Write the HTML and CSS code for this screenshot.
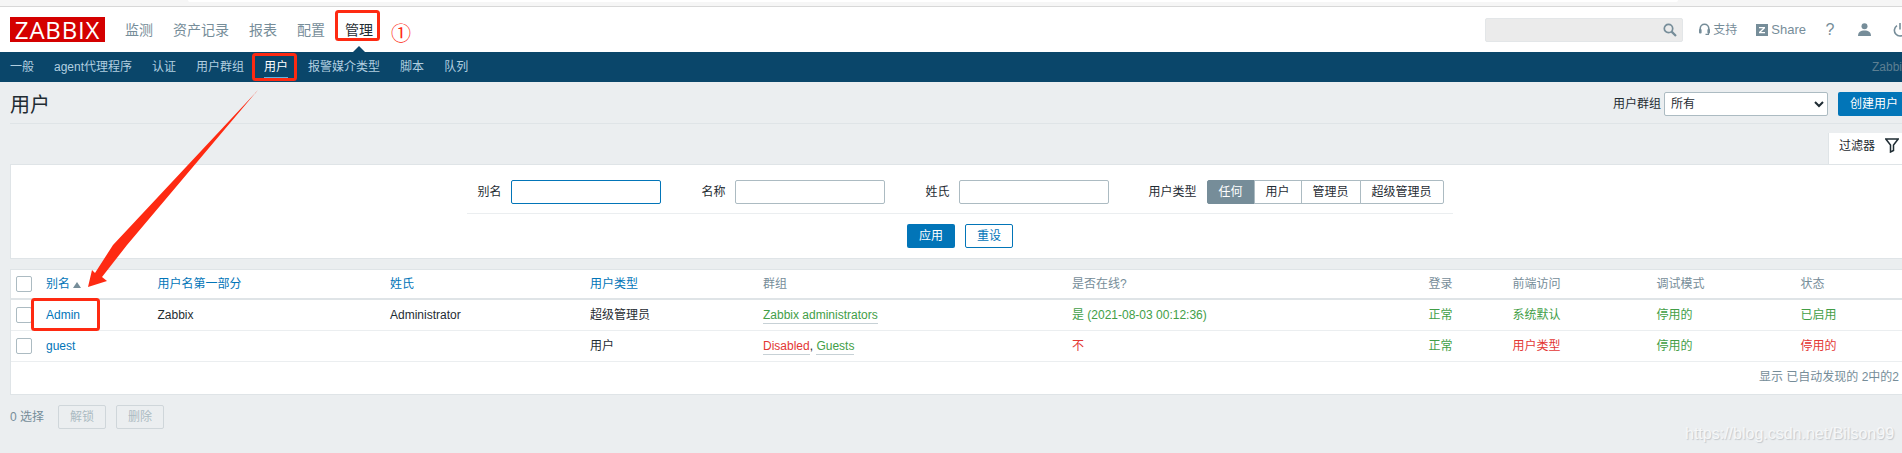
FILE: index.html
```html
<!DOCTYPE html>
<html lang="zh">
<head>
<meta charset="utf-8">
<title>用户</title>
<link rel="stylesheet" href="styles.css">
</head>
<body>
<div class="page">
  <div class="browser-strip"><div class="browser-tab"></div></div>
  <header class="topbar">
    <div class="logo">ZABBIX</div>
    <nav class="mainnav">
      <a>监测</a><a>资产记录</a><a>报表</a><a>配置</a><a class="active">管理</a>
    </nav>
    <div class="tools">
      <div class="search">
        <svg class="ico" width="14" height="14" viewBox="0 0 14 14"><circle cx="5.5" cy="5.5" r="4.2" fill="none" stroke="#768d99" stroke-width="1.7"/><path d="M8.6 8.6L13 13" stroke="#768d99" stroke-width="2.2" fill="none"/></svg>
      </div>
      <a class="tool tool-support">
        <svg class="ico" width="11" height="13" viewBox="0 0 11 13"><path d="M1.2 8V5.5a4.3 4.3 0 0 1 8.6 0V8" fill="none" stroke="#768d99" stroke-width="1.6"/><rect x="0" y="6" width="2.6" height="4.4" rx="1" fill="#768d99"/><rect x="8.4" y="6" width="2.6" height="4.4" rx="1" fill="#768d99"/><path d="M9.5 10v1.4H6.5" fill="none" stroke="#768d99" stroke-width="1.1"/></svg>
        <span>支持</span>
      </a>
      <a class="tool tool-share">
        <svg class="ico" width="12" height="12" viewBox="0 0 12 12"><rect width="12" height="12" fill="#768d99"/><path d="M3 3h6v1.2L5 8h4v1.2H3V8l4-3.8H3z" fill="#fff"/></svg>
        <span>Share</span>
      </a>
      <a class="tool tool-help">?</a>
      <a class="tool tool-user">
        <svg class="ico" width="13" height="13" viewBox="0 0 13 13"><circle cx="6.5" cy="3.2" r="3" fill="#768d99"/><path d="M0 13c0-3.6 2.6-5.4 6.5-5.4S13 9.400 13 13z" fill="#768d99"/></svg>
      </a>
      <a class="tool tool-power">
        <svg class="ico" width="14" height="14" viewBox="0 0 14 14"><path d="M4 2.600a5.600 5.600 0 1 0 6 0" fill="none" stroke="#768d99" stroke-width="1.600"/><path d="M7 0v6.500" stroke="#768d99" stroke-width="1.600"/></svg>
      </a>
    </div>
  </header>
  <nav class="subnav">
    <a>一般</a><a>agent代理程序</a><a>认证</a><a>用户群组</a><a class="active">用户</a><a>报警媒介类型</a><a>脚本</a><a>队列</a>
    <span class="server">Zabbix</span>
  </nav>
  <main class="content">
    <div class="title-row">
      <h1>用户</h1>
      <div class="title-controls">
        <label class="lbl">用户群组</label>
        <select class="group-select"><option>所有</option></select>
        <button class="btn-primary create">创建用户</button>
      </div>
    </div>
    <div class="tab-row">
      <div class="filter-tab">
        <span>过滤器</span>
        <svg width="14" height="15" viewBox="0 0 14 15"><path d="M.8 1h12.400L8.500 7v5.500l-3 1.500V7z" fill="none" stroke="#1f2c33" stroke-width="1.500"/></svg>
      </div>
    </div>
    <section class="filter">
      <div class="filter-fields">
        <label class="lbl">别名</label><input class="inp inp-focus" type="text">
        <label class="lbl field-next">名称</label><input class="inp" type="text">
        <label class="lbl field-next">姓氏</label><input class="inp" type="text">
        <label class="lbl field-next field-last">用户类型</label>
        <div class="segments"><span class="seg on">任何</span><span class="seg">用户</span><span class="seg">管理员</span><span class="seg">超级管理员</span></div>
      </div>
      <div class="filter-actions">
        <button class="btn-primary small">应用</button>
        <button class="btn-outline">重设</button>
      </div>
    </section>
    <section class="list">
      <table>
        <colgroup>
          <col class="c-check"><col class="c-alias"><col class="c-first"><col class="c-last"><col class="c-type"><col class="c-group"><col class="c-online"><col class="c-login"><col class="c-front"><col class="c-debug"><col class="c-status">
        </colgroup>
        <thead>
          <tr>
            <th><span class="check"></span></th>
            <th><a class="link">别名</a><span class="sort"></span></th>
            <th><a class="link">用户名第一部分</a></th>
            <th><a class="link">姓氏</a></th>
            <th><a class="link">用户类型</a></th>
            <th class="muted">群组</th>
            <th class="muted">是否在线?</th>
            <th class="muted">登录</th>
            <th class="muted">前端访问</th>
            <th class="muted">调试模式</th>
            <th class="muted">状态</th>
          </tr>
        </thead>
        <tbody>
          <tr>
            <td><span class="check"></span></td>
            <td><a class="link">Admin</a></td>
            <td>Zabbix</td>
            <td>Administrator</td>
            <td>超级管理员</td>
            <td><a class="green under">Zabbix administrators</a></td>
            <td class="green">是 (2021-08-03 00:12:36)</td>
            <td class="green">正常</td>
            <td class="green">系统默认</td>
            <td class="green">停用的</td>
            <td class="green">已启用</td>
          </tr>
          <tr>
            <td><span class="check"></span></td>
            <td><a class="link">guest</a></td>
            <td></td>
            <td></td>
            <td>用户</td>
            <td><a class="red under">Disabled</a>, <a class="green under">Guests</a></td>
            <td class="red">不</td>
            <td class="green">正常</td>
            <td class="red">用户类型</td>
            <td class="green">停用的</td>
            <td class="red">停用的</td>
          </tr>
        </tbody>
      </table>
      <div class="list-foot">显示 已自动发现的 2中的2</div>
    </section>
    <div class="actions">
      <span class="selected">0 选择</span>
      <button class="btn-off">解锁</button>
      <button class="btn-off">删除</button>
    </div>
  </main>
</div>
<svg class="marks" width="1902" height="453" viewBox="0 0 1902 453">
  <rect x="336.500" y="11.500" width="42" height="28" rx="2" fill="none" stroke="#fe2a12" stroke-width="3"/>
  <rect x="253.500" y="54.500" width="42" height="25" rx="2" fill="none" stroke="#fe2a12" stroke-width="3"/>
  <rect x="32.500" y="299.500" width="66" height="30" rx="2" fill="none" stroke="#fe2a12" stroke-width="3"/>
  <polygon points="258,90 127,245 102,277 107,281 88,287 92,270 95,273 113,245" fill="#fe2a12"/>
</svg>
<span class="circled">①</span>
<span class="watermark">https://blog.csdn.net/Bilson99</span>
</body>
</html>
```
FILE: styles.css
```css
* { box-sizing: border-box; }
html, body { margin: 0; padding: 0; }
body {
  width: 1902px;
  height: 453px;
  overflow: hidden;
  position: relative;
  background: #ebeef0;
  font-family: "Liberation Sans", "Noto Sans CJK SC", sans-serif;
  font-size: 12px;
  line-height: 14px;
  color: #1f2c33;
}
.page { width: 1920px; }
a { text-decoration: none; }

.browser-strip {
  height: 7px;
  background: #f6f6f6;
  border-bottom: 1px solid #d8d8d8;
  padding-left: 188px;
}
.browser-tab {
  width: 1490px;
  height: 2px;
  background: #fff;
  border-radius: 0 0 4px 4px;
}

.topbar {
  height: 45px;
  background: #fff;
  display: flex;
  align-items: center;
  padding-left: 10px;
}
.logo {
  width: 95px;
  height: 25px;
  background: #d40000;
  color: #fff;
  font-family: "Open Sans", sans-serif;
  font-size: 24px;
  line-height: 25px;
  letter-spacing: .8px;
  text-align: center;
}
.mainnav { display: flex; margin-left: 10px; font-size: 14px; line-height: 18px; }
.mainnav a { padding: 0 10px; color: #768d99; }
.mainnav a.active { color: #1f2c33; }
.mainnav a.active { position: relative; }
.mainnav a.active::after {
  content: "";
  position: absolute;
  left: 50%;
  margin-left: -7px;
  bottom: -14px;
  border: 7px solid transparent;
  border-top: 0;
  border-bottom-color: #0a466a;
}

.tools {
  margin-left: auto;
  display: flex;
  align-items: center;
  color: #768d99;
}
.search {
  width: 198px;
  height: 24px;
  background: #ebebeb;
  border: 1px solid #e3e6e8;
  border-radius: 2px;
  display: flex;
  align-items: center;
  justify-content: flex-end;
  padding-right: 5px;
}
.tool { display: flex; align-items: center; color: #768d99; }
.tool-support { margin-left: 16px; gap: 3px; }
.tool-share { margin-left: 19px; gap: 3px; font-size: 13px; }
.tool-help { margin-left: 21px; font-size: 16px; width: 6px; justify-content: center; }
.tool-user { margin-left: 25px; }
.tool-power { margin-left: 22px; margin-right: 13px; }
.tool span { font-size: 12px; }
.tool-share span { font-size: 13px; }
.ico { display: block; }

.subnav {
  height: 30px;
  background: #0a466a;
  display: flex;
  align-items: center;
  padding-left: 10px;
  gap: 20px;
  color: #b1cfe0;
}
.subnav a { position: relative; color: #b1cfe0; }
.subnav a.active { color: #fff; }
.subnav a.active::after {
  content: "";
  position: absolute;
  left: 0;
  right: 0;
  bottom: -4px;
  height: 1px;
  background: #5fb2e0;
}
.server { margin-left: auto; margin-right: 12px; color: #5d7f92; }

.content { padding: 0 10px; }
.title-row {
  height: 42px;
  border-bottom: 1px solid #dfe4e7;
  display: flex;
  align-items: center;
  justify-content: space-between;
}
h1 { margin: 0; font-size: 20px; line-height: 24px; font-weight: 400; color: #1f2c33; position: relative; top: 2px; }
.title-controls { display: flex; align-items: center; padding-top: 3px; }
.lbl { white-space: nowrap; }
.group-select {
  width: 164px;
  height: 24px;
  margin-left: 3px;
  padding: 0 2px;
  background: #fff;
  border: 1px solid #acbbc2;
  border-radius: 2px;
  font: inherit;
  color: #1f2c33;
}
.btn-primary {
  height: 24px;
  padding: 0;
  border: 0;
  border-radius: 2px;
  background: #0275b8;
  color: #fff;
  font: inherit;
}
.create { width: 72px; margin-left: 10px; }
.small { width: 48px; }

.tab-row { margin-top: 9px; height: 31px; display: flex; justify-content: flex-end; }
.filter-tab {
  width: 82px;
  height: 31px;
  background: #fff;
  border-left: 1px solid #dfe4e7;
  display: flex;
  align-items: flex-start;
  padding: 5px 0 0 10px;
  gap: 10px;
}
.filter-tab span { padding-top: 1px; }
.filter {
  height: 95px;
  background: #fff;
  border: 1px solid #dfe4e7;
  display: flex;
  flex-direction: column;
  align-items: center;
  padding-top: 15px;
}
.filter-fields {
  width: 986px;
  height: 34px;
  padding-left: 1px;
  border-bottom: 1px solid #ebeef0;
  display: flex;
  align-items: flex-start;
  justify-content: center;
}
.filter-fields .lbl { line-height: 24px; margin-right: 10px; }
.field-next { margin-left: 40px; }
.field-last { margin-left: 39px; }
.inp {
  width: 150px;
  height: 24px;
  border: 1px solid #acbbc2;
  border-radius: 2px;
  background: #fff;
  padding: 0 4px;
  outline: 0;
}
.inp-focus { border-color: #0275b8; }
.segments { display: flex; }
.seg {
  height: 24px;
  line-height: 22px;
  padding: 0 11px;
  border: 1px solid #acbbc2;
  margin-left: -1px;
  background: #fff;
}
.seg:first-child { margin-left: 0; border-radius: 2px 0 0 2px; }
.seg:last-child { border-radius: 0 2px 2px 0; }
.seg.on { background: #768d99; border-color: #768d99; color: #fff; }
.filter-actions { display: flex; gap: 10px; margin-top: 10px; }
.btn-outline {
  width: 48px;
  height: 24px;
  padding: 0;
  border: 1px solid #0275b8;
  border-radius: 2px;
  background: #fff;
  color: #0275b8;
  font: inherit;
}

.list {
  margin-top: 10px;
  background: #fff;
  border: 1px solid #dfe4e7;
}
table { width: 100%; border-collapse: collapse; table-layout: fixed; }
.c-check { width: 29px; }
.c-alias { width: 111.5px; }
.c-first { width: 232.5px; }
.c-last { width: 200px; }
.c-type { width: 173px; }
.c-group { width: 309px; }
.c-online { width: 356.5px; }
.c-login { width: 84px; }
.c-front { width: 144px; }
.c-debug { width: 144px; }
th, td { padding: 0 6px; text-align: left; font-weight: 400; white-space: nowrap; vertical-align: middle; }
th { height: 29px; border-bottom: 2px solid #dfe4e7; }
td { height: 31px; border-bottom: 1px solid #ebeef0; }
th.muted { color: #768d99; }
.link { color: #0275b8; }
.green { color: #429e47; }
.red { color: #e33734; }
.under { border-bottom: 1px solid #c7d1d6; padding-bottom: 1px; }
.check {
  display: block;
  width: 16px;
  height: 16px;
  margin-left: -1px;
  background: #fff;
  border: 1px solid #acbbc2;
  border-radius: 2px;
}
.sort {
  display: inline-block;
  margin-left: 3px;
  vertical-align: 0;
  border: 4px solid transparent;
  border-top: 0;
  border-bottom: 6px solid #768d99;
}
.list-foot {
  height: 32px;
  line-height: 30px;
  text-align: right;
  padding-right: 10px;
  color: #768d99;
}

.actions { display: flex; align-items: center; margin-top: 10px; color: #768d99; }
.selected { width: 48px; }
.btn-off {
  width: 48px;
  height: 24px;
  padding: 0;
  margin-right: 10px;
  border: 1px solid #cfd6da;
  border-radius: 2px;
  background: #ebeef0;
  color: #acbbc2;
  font: inherit;
}

.marks { position: absolute; left: 0; top: 0; pointer-events: none; }
.circled {
  position: absolute;
  left: 391px;
  top: 24px;
  color: #fe2a12;
  font-size: 20px;
  line-height: 20px;
}
.watermark {
  position: absolute;
  left: 1685px;
  top: 425px;
  font-size: 16px;
  line-height: 18px;
  color: #f6f7f8;
  text-shadow: 1px 1px 1px #c3c8cc;
}
```
